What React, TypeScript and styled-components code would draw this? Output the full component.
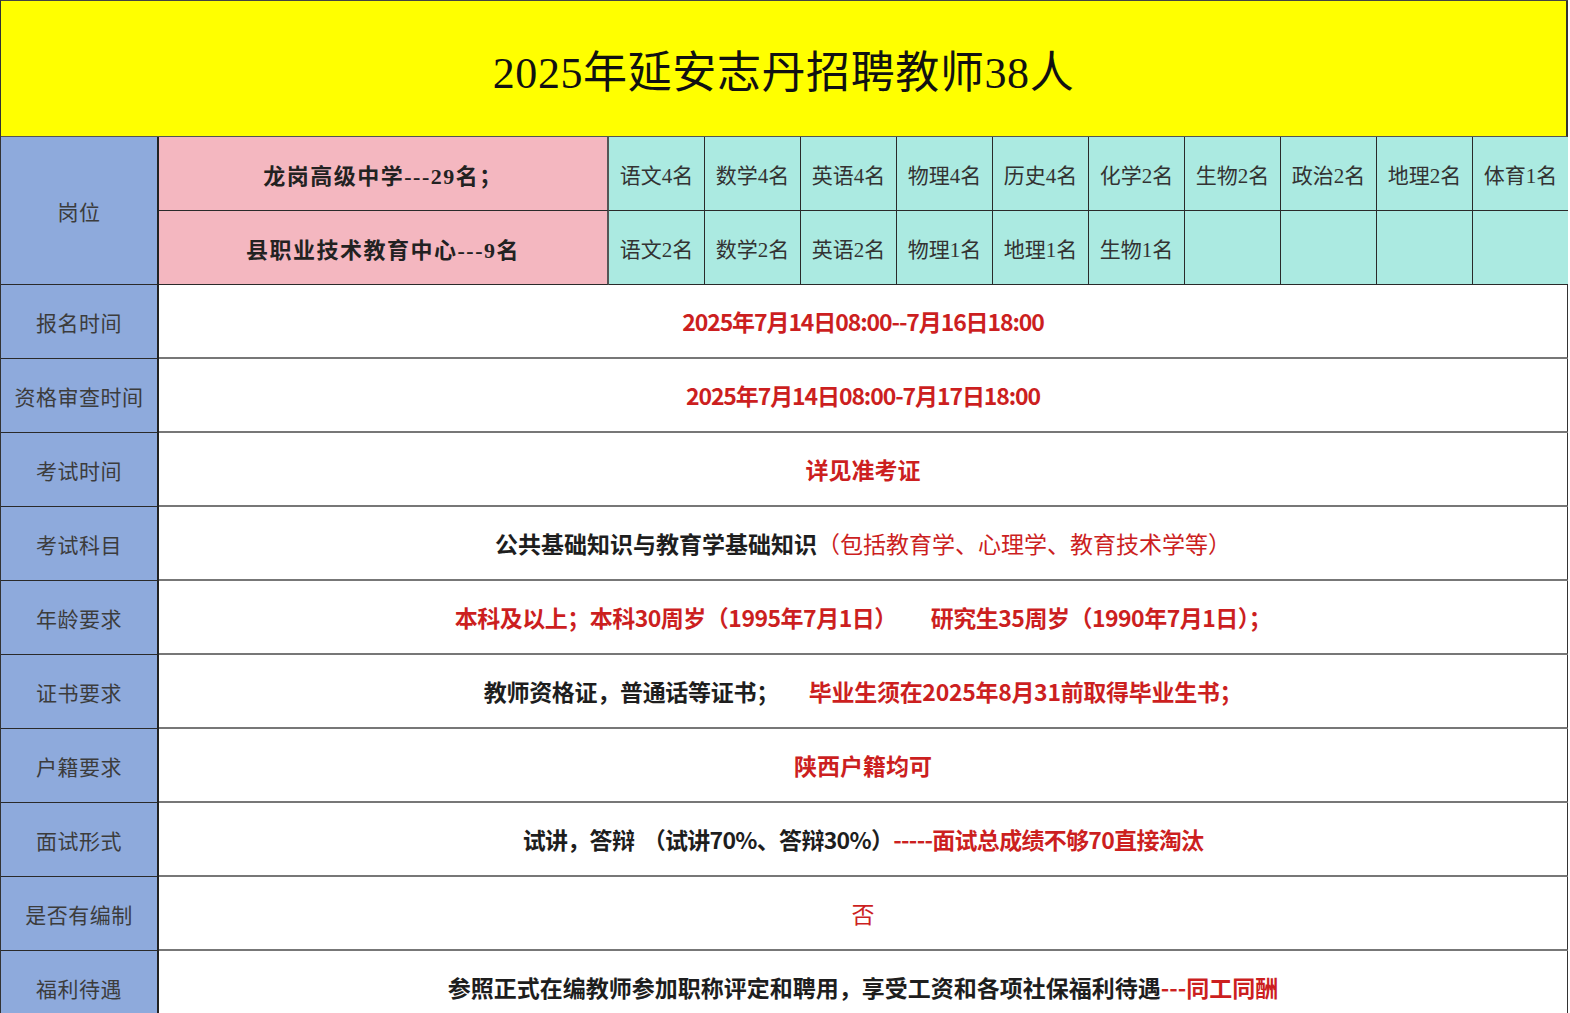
import React from "react";
import styled, { createGlobalStyle } from "styled-components";

const GlobalStyle = createGlobalStyle`
  html, body {
    margin: 0;
    padding: 0;
    background: #ffffff;
  }
  body {
    font-family: "Liberation Serif", "Noto Sans CJK SC", serif;
  }
`;

const serif = `"Liberation Serif", "Noto Sans CJK SC", serif`;
const sans = `"Noto Sans CJK SC", "Liberation Sans", sans-serif`;

const Sheet = styled.div`
  width: 1568px;
  border-left: 1px solid #333;
  border-top: 1px solid #444;
  box-sizing: border-box;
  overflow: hidden;
`;

const Banner = styled.div`
  height: 135px;
  background: #ffff00;
  display: flex;
  align-items: center;
  justify-content: center;
  border-right: 2px solid #333;
  border-bottom: 1px solid #555;
  font-family: ${serif};
  font-size: 44px;
  color: #111;
  letter-spacing: 0.6px;
`;

const PostGrid = styled.div`
  display: grid;
  grid-template-columns: 158px 450px repeat(10, 96px);
  grid-template-rows: 74px 74px;
`;

const Cell = styled.div`
  display: flex;
  align-items: center;
  justify-content: center;
  background: #ffffff;
  border-right: 1px solid #2a2a2a;
  border-bottom: 1px solid #2a2a2a;
  box-sizing: border-box;
  white-space: nowrap;
`;

const Label = styled(Cell)<{ $span?: number }>`
  background: #8eaadc;
  grid-row: span ${(p) => p.$span || 1};
  font-family: ${serif};
  font-size: 21px;
  color: #3c3c3c;
  border-right: 2px solid #222;
  letter-spacing: 0.5px;
`;

const School = styled(Cell)`
  background: #f4b7c0;
  font-family: ${serif};
  font-size: 22px;
  font-weight: 700;
  color: #222;
  border-right: 2px solid #555;
  letter-spacing: 1.5px;
`;

const Subject = styled(Cell)`
  background: #abeae1;
  font-family: ${serif};
  font-size: 21px;
  color: #333;
`;

const InfoRow = styled.div`
  display: grid;
  grid-template-columns: 158px 1410px;
  height: 74px;
`;

const Content = styled(Cell)<{ $track?: number }>`
  border-bottom: 2px solid #777;
  border-right: 2px solid #333;
  font-family: ${sans};
  font-size: 23px;
  letter-spacing: ${(p) => p.$track || 0}px;
`;

const Dark = styled.span`
  color: #1e1e1e;
  font-weight: 700;
`;

const Red = styled.span<{ $light?: boolean }>`
  color: #cc1f1f;
  font-weight: ${(p) => (p.$light ? 400 : 700)};
`;

const Gap = styled.span<{ $w: number }>`
  display: inline-block;
  width: ${(p) => p.$w}px;
`;

const row1 = ["语文4名", "数学4名", "英语4名", "物理4名", "历史4名", "化学2名", "生物2名", "政治2名", "地理2名", "体育1名"];
const row2 = ["语文2名", "数学2名", "英语2名", "物理1名", "地理1名", "生物1名", "", "", "", ""];

type Info = { label: string; track?: number; body: React.ReactNode };

const infos: Info[] = [
  { label: "报名时间", track: -1.1, body: <Red>2025年7月14日08:00--7月16日18:00</Red> },
  { label: "资格审查时间", track: -1.1, body: <Red>2025年7月14日08:00-7月17日18:00</Red> },
  { label: "考试时间", body: <Red>详见准考证</Red> },
  {
    label: "考试科目",
    body: (
      <>
        <Dark>公共基础知识与教育学基础知识</Dark>
        <Red $light>（包括教育学、心理学、教育技术学等）</Red>
      </>
    ),
  },
  {
    label: "年龄要求",
    track: -0.5,
    body: (
      <Red>
        本科及以上；本科30周岁（1995年7月1日）<Gap $w={34} />研究生35周岁（1990年7月1日）；
      </Red>
    ),
  },
  {
    label: "证书要求",
    track: -0.3,
    body: (
      <>
        <Dark>教师资格证，普通话等证书；</Dark>
        <Gap $w={30} />
        <Red>毕业生须在2025年8月31前取得毕业生书；</Red>
      </>
    ),
  },
  { label: "户籍要求", body: <Red>陕西户籍均可</Red> },
  {
    label: "面试形式",
    track: -0.7,
    body: (
      <>
        <Dark>试讲，答辩 <Gap $w={4} />（试讲70%、答辩30%）</Dark>
        <Red>-----面试总成绩不够70直接淘汰</Red>
      </>
    ),
  },
  { label: "是否有编制", body: <Red $light>否</Red> },
  {
    label: "福利待遇",
    body: (
      <>
        <Dark>参照正式在编教师参加职称评定和聘用，享受工资和各项社保福利待遇</Dark>
        <Red>---同工同酬</Red>
      </>
    ),
  },
];

export default function App() {
  return (
    <>
      <GlobalStyle />
      <Sheet>
        <Banner>2025年延安志丹招聘教师38人</Banner>
        <PostGrid>
          <Label $span={2}>岗位</Label>
          <School>龙岗高级中学---29名；</School>
          {row1.map((s, i) => (
            <Subject key={"a" + i}>{s}</Subject>
          ))}
          <School>县职业技术教育中心---9名</School>
          {row2.map((s, i) => (
            <Subject key={"b" + i}>{s}</Subject>
          ))}
        </PostGrid>
        {infos.map((info) => (
          <InfoRow key={info.label}>
            <Label>{info.label}</Label>
            <Content $track={info.track}>{info.body}</Content>
          </InfoRow>
        ))}
      </Sheet>
    </>
  );
}
